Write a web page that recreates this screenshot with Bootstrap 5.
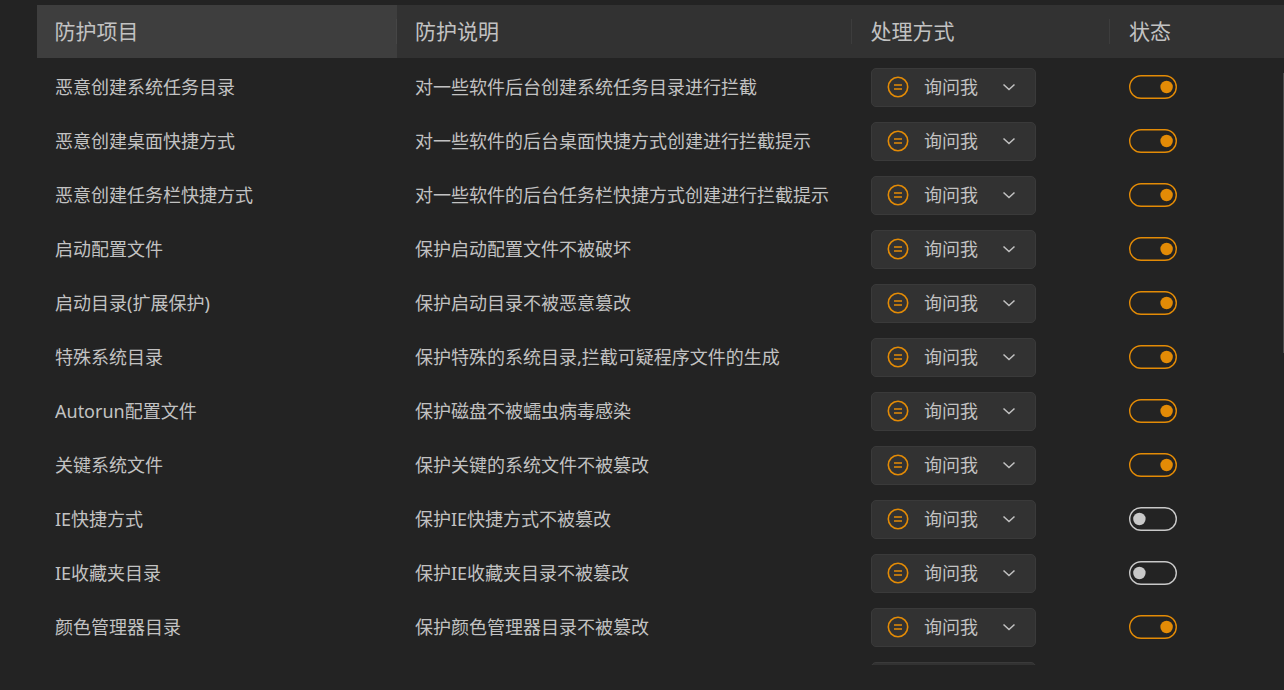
<!DOCTYPE html>
<html lang="zh-CN">
<head>
<meta charset="utf-8">
<title>防护项目</title>
<link href="https://cdn.jsdelivr.net/npm/bootstrap@5.3.0/dist/css/bootstrap.min.css" rel="stylesheet">
<style>
html,body{height:100%;overflow:hidden;background:#232323}
body{font-family:"Microsoft YaHei","Noto Sans","Noto Sans CJK SC",sans-serif;color:#c2c2c2;font-size:18px}
.page-wrap{padding:5px 0 0 37px}
.clip-area{height:660px;overflow:hidden}
.rule-table{table-layout:fixed;width:1247px;margin:0;--bs-table-bg:transparent;--bs-table-color:#c2c2c2;border-collapse:collapse}
.rule-table th,.rule-table td{border:0;padding:1px 0 0 18px;vertical-align:middle;white-space:nowrap;font-weight:400;box-shadow:none}
.rule-table td:nth-child(3){padding-left:19px}
.rule-table thead th{height:53px;padding:0 0 0 18px;background:#323232;font-size:21px;position:relative;color:#c2c2c2}
.rule-table thead th:first-child{background:#3e3e3e;padding-left:17.5px}
.rule-table thead th:nth-child(3){padding-left:18.5px}
.rule-table thead th:nth-child(4){padding-left:19px}
.rule-table thead th+th::before{content:"";position:absolute;left:-1px;top:14px;height:25px;width:1px;background:#3d3d3d}
.rule-table thead th:nth-child(2)::before{background:#464646}
.rule-table tbody td{height:54px}
.rule-table tbody tr:first-child td{height:56px;padding-top:3px}
.rule-table tbody td.state-cell{padding:0 0 0 19px}
.rule-table tbody tr:first-child td.state-cell{padding-top:2px}
.mode-btn{width:165px;height:39px;padding:0 19px 1px 15px;display:flex;align-items:center;background:#323232;border:1px solid #3a3a3a;border-radius:5px;color:#c2c2c2;font-size:18px;line-height:1}
.mode-btn:hover,.mode-btn:active{background:#323232;border-color:#3a3a3a;color:#c2c2c2}
.mode-ico{width:22px;height:22px;flex:none;margin-right:15px}
.mode-caret{width:14px;height:14px;flex:none;margin-left:auto}
.state-pill{display:block;width:48px;height:24px}
.scroll-thumb{position:absolute;right:0;top:73px;width:1px;height:280px;background:#4a4a4a}
</style>
</head>
<body>
<div class="page-wrap">
<div class="clip-area">
<table class="table rule-table">
<colgroup><col style="width:360px"><col style="width:455px"><col style="width:258px"><col></colgroup>
<thead><tr><th>防护项目</th><th>防护说明</th><th>处理方式</th><th>状态</th></tr></thead>
<tbody id="rows"></tbody>
</table>
</div>
</div>
<div class="scroll-thumb"></div>
<script>
const data=[
["恶意创建系统任务目录","对一些软件后台创建系统任务目录进行拦截",1],
["恶意创建桌面快捷方式","对一些软件的后台桌面快捷方式创建进行拦截提示",1],
["恶意创建任务栏快捷方式","对一些软件的后台任务栏快捷方式创建进行拦截提示",1],
["启动配置文件","保护启动配置文件不被破坏",1],
["启动目录(扩展保护)","保护启动目录不被恶意篡改",1],
["特殊系统目录","保护特殊的系统目录,拦截可疑程序文件的生成",1],
["Autorun配置文件","保护磁盘不被蠕虫病毒感染",1],
["关键系统文件","保护关键的系统文件不被篡改",1],
["IE快捷方式","保护IE快捷方式不被篡改",0],
["IE收藏夹目录","保护IE收藏夹目录不被篡改",0],
["颜色管理器目录","保护颜色管理器目录不被篡改",1]];
const pill=on=>{const c=on?'#e38b06':'#c8c8c8';return `<svg class="state-pill" viewBox="0 0 48 24" fill="none"><rect x=".7" y=".7" width="46.6" height="22.6" rx="11.3" stroke="${c}" stroke-width="1.4"/><circle cx="${on?37.6:10.4}" cy="12" r="6.2" fill="${c}"/></svg>`};
document.getElementById('rows').innerHTML=data.map(d=>`<tr><td>${d[0]}</td><td>${d[1]}</td><td><button type="button" class="btn mode-btn"><svg class="mode-ico" viewBox="0 0 22 22" fill="none" stroke="#e38b06"><circle cx="11" cy="11" r="9.7" stroke-width="1.6"/><path d="M7 9h8M7 13h8" stroke-width="1.6"/></svg><span>询问我</span><svg class="mode-caret" viewBox="0 0 14 14" fill="none" stroke="#c2c2c2" stroke-width="1.5"><path d="M1.5 4.5 7 9.5l5.5-5"/></svg></button></td><td class="state-cell">${pill(d[2])}</td></tr>`).join('')
+`<tr><td></td><td></td><td><button type="button" class="btn mode-btn" aria-label="询问我"></button></td><td></td></tr>`;
</script>
<script src="https://cdn.jsdelivr.net/npm/bootstrap@5.3.0/dist/js/bootstrap.bundle.min.js"></script>
</body>
</html>
